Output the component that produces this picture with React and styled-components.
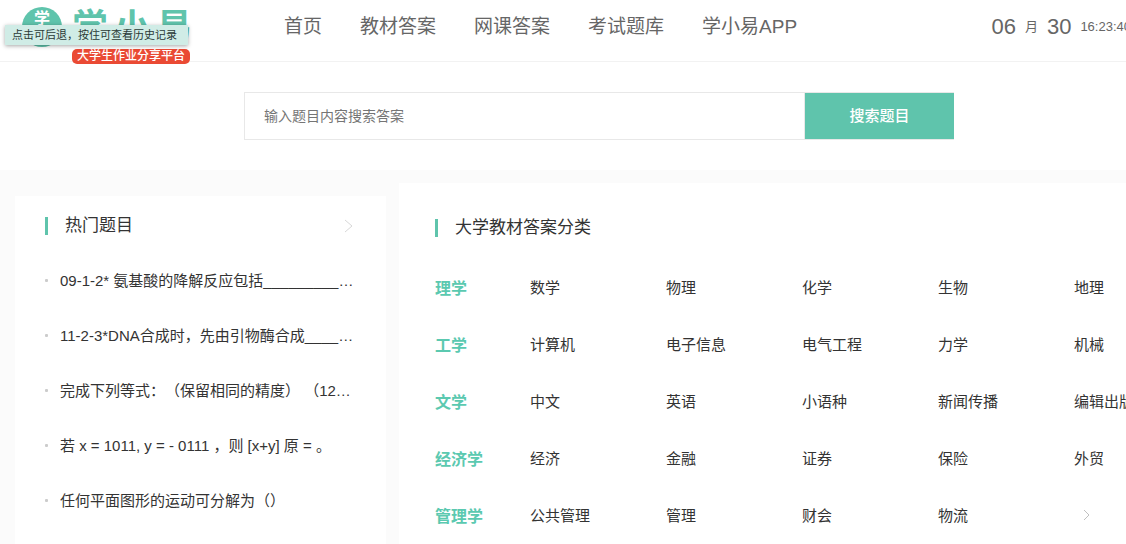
import React from 'react';
import styled, { createGlobalStyle } from 'styled-components';

const questions = [
  '09-1-2* 氨基酸的降解反应包括____________________',
  '11-2-3*DNA合成时，先由引物酶合成____________________',
  '完成下列等式：（保留相同的精度） （12345678）',
  '若 x = 1011, y = - 0111 ，则 [x+y] 原 = 。',
  '任何平面图形的运动可分解为（）',
];

const categories = [
  { name: '理学', items: ['数学', '物理', '化学', '生物', '地理'] },
  { name: '工学', items: ['计算机', '电子信息', '电气工程', '力学', '机械'] },
  { name: '文学', items: ['中文', '英语', '小语种', '新闻传播', '编辑出版'] },
  { name: '经济学', items: ['经济', '金融', '证券', '保险', '外贸'] },
  { name: '管理学', items: ['公共管理', '管理', '财会', '物流'], more: true },
];

const navItems = ['首页', '教材答案', '网课答案', '考试题库', '学小易APP'];

function Chevron({ width, height, color }) {
  return (
    <svg width={width} height={height} viewBox={`0 0 ${width} ${height}`} fill="none" aria-hidden="true">
      <path d={`M1 1L${width - 1} ${height / 2}L1 ${height - 1}`} stroke={color} />
    </svg>
  );
}

function Header() {
  return (
    <HeaderBar>
      <Logo href="#">
        <LogoMark viewBox="0 0 40 40" aria-hidden="true">
          <circle cx="20" cy="20" r="20" fill="#5fc4ac" />
          <text x="20" y="17" textAnchor="middle" fontSize="16" fontWeight="700" fill="#fff">学</text>
        </LogoMark>
        <LogoText>
          <Wordmark>
            <span>学</span>
            <span>小</span>
            <span>易</span>
          </Wordmark>
          <Slogan>大学生作业分享平台</Slogan>
        </LogoText>
      </Logo>
      <Tooltip role="tooltip">点击可后退，按住可查看历史记录</Tooltip>
      <Nav>
        {navItems.map((item) => (
          <NavLink key={item} href="#">{item}</NavLink>
        ))}
      </Nav>
      <DateBox>
        <DateNumber>06</DateNumber>
        <span>月</span>
        <DateNumber>30</DateNumber>
        <span>16:23:40</span>
      </DateBox>
    </HeaderBar>
  );
}

function App() {
  return (
    <Page lang="zh-CN">
      <GlobalStyle />
      <Content>
        <Header />
        <Search onSubmit={(e) => e.preventDefault()}>
          <SearchInput type="text" placeholder="输入题目内容搜索答案" aria-label="输入题目内容搜索答案" />
          <SearchButton type="submit">搜索题目</SearchButton>
        </Search>
        <Main>
          <HotPanel>
            <PanelHeader>
              <Title>热门题目</Title>
              <MoreButton type="button" aria-label="更多">
                <Chevron width={9} height={14} color="#d8d8d8" />
              </MoreButton>
            </PanelHeader>
            <QuestionList>
              {questions.map((q) => (
                <Question key={q}>
                  <QuestionLink href="#">{q}</QuestionLink>
                </Question>
              ))}
            </QuestionList>
          </HotPanel>
          <CategoryPanel>
            <Title>大学教材答案分类</Title>
            <CategoryList>
              {categories.map((c) => (
                <CategoryRow key={c.name}>
                  <CategoryName>{c.name}</CategoryName>
                  {c.items.map((item) => (
                    <CategoryLink key={item} href="#">{item}</CategoryLink>
                  ))}
                  {c.more && (
                    <RowMore type="button" aria-label="更多">
                      <Chevron width={7} height={12} color="#c0c0c0" />
                    </RowMore>
                  )}
                </CategoryRow>
              ))}
            </CategoryList>
          </CategoryPanel>
        </Main>
      </Content>
    </Page>
  );
}

export default App;

const GlobalStyle = createGlobalStyle`
* {
  box-sizing: border-box;
}
body {
  margin: 0;
  background: #fbfbfb;
  color: #333;
  font-family: "Liberation Sans", "Noto Sans CJK SC", sans-serif;
  text-spacing-trim: space-all;
}
a {
  color: inherit;
  text-decoration: none;
}
button, input {
  font-family: inherit;
}
`

const Page = styled.div`
overflow: hidden;
`

const Content = styled.div`
display: flex;
flex-direction: column;
min-width: 1198px;
min-height: 100vh;
`

const HeaderBar = styled.header`
position: relative;
display: flex;
align-items: center;
height: 62px;
padding: 0 67px 8px 22px;
background: #fff;
border-bottom: 1px solid #f2f2f2;
color: #666;
`

const Logo = styled.a`
display: flex;
align-self: flex-start;
flex: none;
width: 262px;
height: 51px;
padding-top: 7px;
`

const LogoMark = styled.svg`
width: 40px;
height: 40px;
margin-right: 10px;
`

const LogoText = styled.div`
display: flex;
flex-direction: column;
align-items: flex-start;
`

const Wordmark = styled.div`
display: flex;
flex: none;
gap: 6px;
color: #5fc4ac;
font-size: 36px;
font-weight: 700;
line-height: 42px;
`

const Slogan = styled.span`
flex: none;
padding: 0 5px;
border-radius: 5px;
background: #ea4a34;
color: #fff;
font-size: 12px;
font-weight: 500;
line-height: 15px;
`

const Tooltip = styled.div`
position: absolute;
top: 25px;
left: 5px;
padding: 0 11px 0 7px;
background: #d0ece6;
color: #2b3a37;
font-size: 11px;
line-height: 20px;
white-space: nowrap;
box-shadow: 0 1px 4px rgba(0, 0, 0, .35);
`

const Nav = styled.nav`
display: flex;
gap: 38px;
`

const NavLink = styled.a`
font-size: 19px;
line-height: 26px;
white-space: nowrap;
`

const DateBox = styled.div`
display: flex;
align-items: center;
gap: 9px;
margin-left: auto;
font-size: 13px;
line-height: 18px;
`

const DateNumber = styled.span`
font-size: 22px;
`

const Search = styled.form`
display: flex;
justify-content: center;
padding: 30px 0;
background: #fff;
`

const SearchInput = styled.input`
width: 561px;
height: 48px;
padding: 0 19px;
border: 1px solid #e8e8e8;
border-radius: 0;
outline: none;
font-size: 14px;

&::placeholder {
  color: #757575;
}
`

const SearchButton = styled.button`
width: 149px;
height: 48px;
padding: 0 0 3px;
border: solid #e8e8e8;
border-width: 1px 0;
background: #5fc4ac;
color: #fff;
font-size: 15px;
font-weight: 500;
cursor: pointer;
`

const Main = styled.main`
display: flex;
flex: 1;
gap: 13px;
padding: 13px 15px 0;
`

const HotPanel = styled.section`
flex: none;
width: 371px;
margin-top: 13px;
padding: 16px 30px 0;
background: #fff;
`

const CategoryPanel = styled.section`
flex: 1;
padding: 31px 0 0 36px;
background: #fff;
`

const PanelHeader = styled.div`
display: flex;
align-items: center;
justify-content: space-between;
`

const Title = styled.h2`
display: flex;
align-items: center;
margin: 0;
font-size: 17px;
font-weight: 400;
line-height: 28px;

&::before {
  content: '';
  width: 3px;
  height: 18px;
  margin-right: 17px;
  background: #5fc4ac;
}
`

const MoreButton = styled.button`
display: flex;
padding: 0 3px;
border: 0;
background: none;
cursor: pointer;
`

const QuestionList = styled.ul`
margin: 13px 0 0;
padding: 0;
list-style: none;
`

const Question = styled.li`
display: flex;
align-items: center;
height: 55px;

&::before {
  content: '';
  flex: none;
  width: 3px;
  height: 3px;
  margin-right: 12px;
  border-radius: 1px;
  background: #ccc;
}
`

const QuestionLink = styled.a`
overflow: hidden;
font-size: 15px;
line-height: 24px;
white-space: nowrap;
text-overflow: ellipsis;
`

const CategoryList = styled.div`
margin-top: 16px;
`

const CategoryRow = styled.div`
display: grid;
grid-template-columns: 95px repeat(4, 136px) 1fr;
align-items: center;
height: 57px;
`

const CategoryName = styled.h3`
margin: 0;
color: #5bc9b0;
font-size: 16px;
font-weight: 600;
`

const CategoryLink = styled.a`
font-size: 15px;
white-space: nowrap;
`

const RowMore = styled(MoreButton)`
padding: 0 9px;
`
